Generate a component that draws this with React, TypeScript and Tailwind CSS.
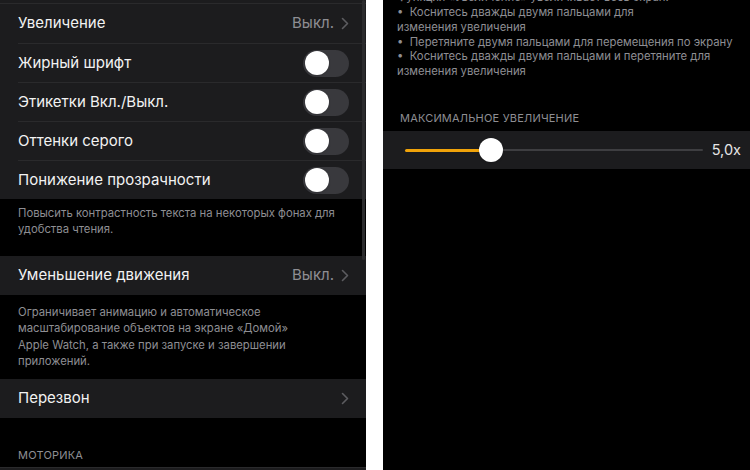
import React from "react";

const font = { fontFamily: "Inter, 'Noto Sans', sans-serif" };

function Chevron() {
  return (
    <svg width="8" height="13" viewBox="0 0 8 13" className="ml-[7px]">
      <path d="M1.5 1.5 L6.5 6.5 L1.5 11.5" fill="none" stroke="#5c5c60" strokeWidth="1.6" strokeLinecap="round" strokeLinejoin="round" />
    </svg>
  );
}

function Toggle() {
  return (
    <div className="w-[46px] h-[27px] rounded-full bg-[#39393d] p-[1.5px] flex items-center">
      <div className="w-[24px] h-[24px] rounded-full bg-white shadow" />
    </div>
  );
}

function Row({ label, value, toggle, top }: { label: string; value?: string; toggle?: boolean; top?: boolean }) {
  return (
    <div className="h-[39px] bg-[#1c1c1e] pl-[18px]">
      <div className={`h-full flex items-center pr-[17px] ${top ? "" : "border-t border-[#2a2a2c]"}`}>
        <span className="flex-1 text-[15px] text-[#f2f2f2]">{label}</span>
        {value !== undefined && (
          <span className="flex items-center text-[15px] text-[#8e8e93]">
            {value}
            <Chevron />
          </span>
        )}
        {toggle && <Toggle />}
      </div>
    </div>
  );
}

function Note({ lines }: { lines: string[] }) {
  return (
    <div className="px-[18px] text-[11.3px] leading-[16.4px] text-[#8e8e93]">
      {lines.map((l, i) => (
        <div key={i}>{l}</div>
      ))}
    </div>
  );
}

function LeftPanel() {
  return (
    <div className="relative w-[366px] h-[470px] bg-black overflow-hidden">
      <div className="h-[4px] bg-[#1c1c1e] border-b border-[#2a2a2c]" />
      <Row label="Увеличение" value="Выкл." top />
      <Row label="Жирный шрифт" toggle />
      <Row label="Этикетки Вкл./Выкл." toggle />
      <Row label="Оттенки серого" toggle />
      <Row label="Понижение прозрачности" toggle />
      <div className="pt-[6px] h-[57px]">
        <Note lines={["Повысить контрастность текста на некоторых фонах для", "удобства чтения."]} />
      </div>
      <Row label="Уменьшение движения" value="Выкл." top />
      <div className="pt-[9px] h-[84px]">
        <Note lines={["Ограничивает анимацию и автоматическое", "масштабирование объектов на экране «Домой»", "Apple Watch, а также при запуске и завершении", "приложений."]} />
      </div>
      <Row label="Перезвон" value="" top />
      <div className="h-[49px] flex items-end pl-[18px] pb-[4px] text-[11px] text-[#8e8e93] tracking-[0.2px]">МОТОРИКА</div>
      <div className="h-[10px] bg-[#1c1c1e] border-t border-[#2a2a2c]" />
      {/* scroll indicator */}
      <div className="absolute left-[362px] top-0 w-[3px] h-[260px] rounded-full bg-[#2b2b2d]" />
    </div>
  );
}

function RightPanel() {
  return (
    <div className="flex-1 h-[470px] bg-black overflow-hidden">
      <div className="pl-[14px] text-[11.3px] text-[#8e8e93] -mt-[10px]">
        <div className="h-[15px] leading-[15px]">Функция «Увеличение» увеличивает весь экран.</div>
        <div className="h-[14px] leading-[14px]">•&nbsp;&nbsp;Коснитесь дважды двумя пальцами для</div>
        <div className="h-[16px] leading-[16px]">изменения увеличения</div>
        <div className="h-[14px] leading-[14px]">•&nbsp;&nbsp;Перетяните двумя пальцами для перемещения по экрану</div>
        <div className="h-[14px] leading-[14px]">•&nbsp;&nbsp;Коснитесь дважды двумя пальцами и перетяните для</div>
        <div className="h-[16px] leading-[16px]">изменения увеличения</div>
      </div>
      <div className="h-[52px] flex items-end pl-[17px] pb-[5px] text-[11px] text-[#8e8e93] tracking-[0.2px]">
        МАКСИМАЛЬНОЕ УВЕЛИЧЕНИЕ
      </div>
      <div className="h-[38px] bg-[#1c1c1e] flex items-center pl-[22px] pr-[9px]">
        <div className="relative flex-1 h-[24px] flex items-center">
          <div className="h-[3px] w-[87px] bg-[#f0a30a] rounded-l-full" />
          <div className="h-[2px] flex-1 bg-[#3e3e41] rounded-r-full" />
          <div className="absolute left-[74px] top-0 w-[24px] h-[24px] rounded-full bg-white shadow" />
        </div>
        <span className="ml-[9px] text-[14.5px] text-[#e5e5e5]">5,0x</span>
      </div>
    </div>
  );
}

export default function App() {
  return (
    <div className="w-[750px] h-[470px] flex bg-white overflow-hidden" style={font}>
      <LeftPanel />
      <div className="w-[17px]" />
      <RightPanel />
    </div>
  );
}
